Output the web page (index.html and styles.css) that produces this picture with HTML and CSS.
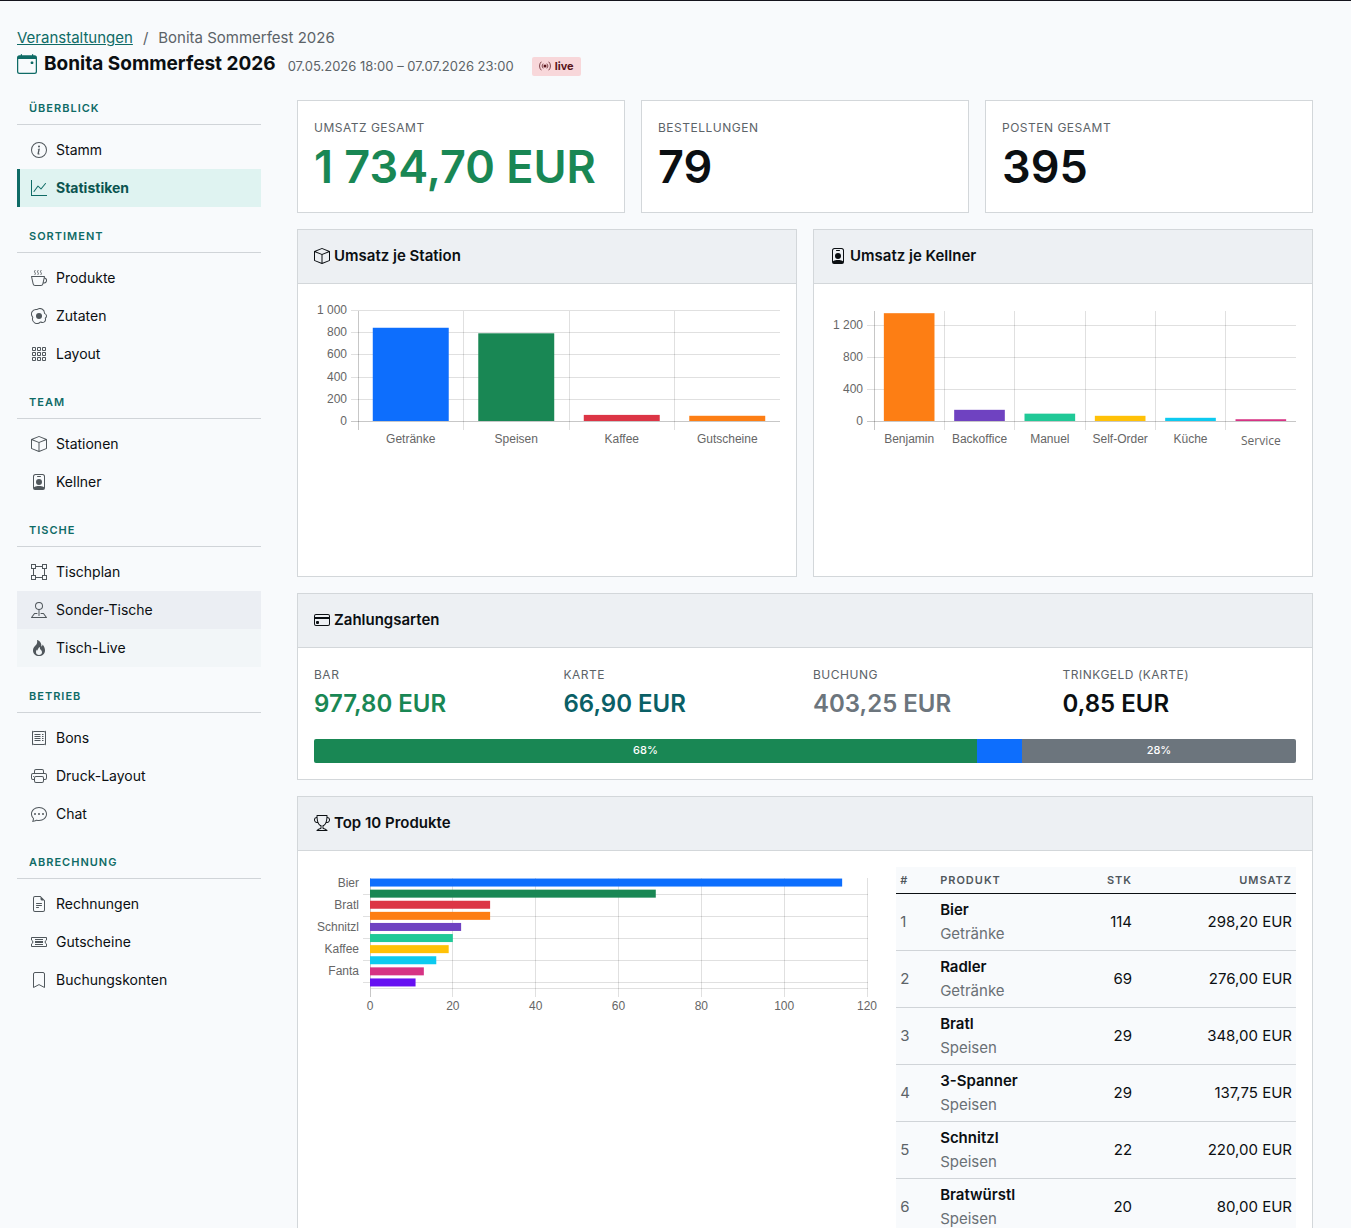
FILE: index.html
```html
<!DOCTYPE html>
<html lang="de">
<head>
    <meta charset="UTF-8">
    <meta name="viewport" content="width=device-width, initial-scale=1.0">
    <title>Bonita Sommerfest 2026</title>
    <link rel="stylesheet" href="styles.css">
</head>
<body>
    <!-- Icons -->
    <svg class="sprite" aria-hidden="true">
        <symbol id="i-calendar" viewBox="0 0 16 16"><path d="M11 6.5a.5.5 0 0 1 .5-.5h1a.5.5 0 0 1 .5.5v1a.5.5 0 0 1-.5.5h-1a.5.5 0 0 1-.5-.5z"/><path d="M3.500 0a.5.5 0 0 1 .5.5V1h8V.5a.5.5 0 0 1 1 0V1h1a2 2 0 0 1 2 2v11a2 2 0 0 1-2 2H2a2 2 0 0 1-2-2V3a2 2 0 0 1 2-2h1V.5a.5.5 0 0 1 .5-.5M1 4v10a1 1 0 0 0 1 1h12a1 1 0 0 0 1-1V4z"/></symbol>
        <symbol id="i-broadcast" viewBox="0 0 16 16"><circle cx="8" cy="8" r="2"/><path fill="none" stroke="currentColor" stroke-linecap="round" d="M2.700 2.700a7.500 7.500 0 0 0 0 10.600M5.200 5.200a4 4 0 0 0 0 5.600M10.800 5.200a4 4 0 0 1 0 5.600M13.300 2.700a7.500 7.500 0 0 1 0 10.600"/></symbol>
        <symbol id="i-info" viewBox="0 0 16 16"><path d="M8 15A7 7 0 1 1 8 1a7 7 0 0 1 0 14m0 1A8 8 0 1 0 8 0a8 8 0 0 0 0 16"/><path d="m8.930 6.588-2.290.287-.082.380.450.083c.294.070.352.176.288.469l-.738 3.468c-.194.897.105 1.319.808 1.319.545 0 1.178-.252 1.465-.598l.088-.416c-.200.176-.492.246-.686.246-.275 0-.375-.193-.304-.533zM9 4.500a1 1 0 1 1-2 0 1 1 0 0 1 2 0"/></symbol>
        <symbol id="i-graph" viewBox="0 0 16 16"><path d="M0 0h1v15h15v1H0zm14.817 3.113a.5.5 0 0 1 .07.704l-4.500 5.500a.5.5 0 0 1-.74.037L7.060 6.767l-3.656 5.027a.5.5 0 0 1-.808-.588l4-5.500a.5.5 0 0 1 .758-.060l2.609 2.610 4.150-5.073a.5.5 0 0 1 .704-.070"/></symbol>
        <symbol id="i-cup" viewBox="0 0 16 16"><path d="M.5 6a.5.5 0 0 0-.488.608l1.652 7.434A2.500 2.500 0 0 0 4.104 16h5.792a2.500 2.500 0 0 0 2.440-1.958l.131-.590a3 3 0 0 0 1.300-5.854l.221-.990A.5.5 0 0 0 13.500 6zM13 12.500a2 2 0 0 1-.316-.025l.867-3.898A2.001 2.001 0 0 1 13 12.500M2.640 13.825 1.123 7h11.754l-1.517 6.825A1.500 1.500 0 0 1 9.896 15H4.104a1.500 1.500 0 0 1-1.464-1.175"/><path fill="none" stroke="currentColor" stroke-linecap="round" d="M4 .5c-.900 1.300-.500 1.500 0 2.200s.500 1 0 1.800M7 .5c-.900 1.300-.500 1.500 0 2.200s.500 1 0 1.800M10 .5c-.900 1.300-.500 1.500 0 2.200s.500 1 0 1.800"/></symbol>
        <symbol id="i-egg" viewBox="0 0 16 16"><path d="M8 11a3 3 0 1 0 0-6 3 3 0 0 0 0 6"/><path d="M13.997 5.170a5 5 0 0 0-8.101-4.090A5 5 0 0 0 1.280 9.342a5 5 0 0 0 8.336 5.109 3.500 3.500 0 0 0 5.201-4.065 3.001 3.001 0 0 0-.822-5.216zm-1-.034a1 1 0 0 0 .668.977 2.001 2.001 0 0 1 .547 3.478 1 1 0 0 0-.341 1.113 2.500 2.500 0 0 1-3.715 2.905 1 1 0 0 0-1.262.152 4 4 0 0 1-6.670-4.087 1 1 0 0 0-.200-1 4 4 0 0 1 3.693-6.610 1 1 0 0 0 .8-.2 4 4 0 0 1 6.480 3.273z"/></symbol>
        <symbol id="i-grid" viewBox="0 0 16 16"><path fill="none" stroke="currentColor" d="M1.500 1.500h3v3h-3zM6.500 1.500h3v3h-3zM11.500 1.500h3v3h-3zM1.500 6.500h3v3h-3zM6.500 6.500h3v3h-3zM11.500 6.500h3v3h-3zM1.500 11.500h3v3h-3zM6.500 11.500h3v3h-3zM11.500 11.500h3v3h-3z"/></symbol>
        <symbol id="i-box" viewBox="0 0 16 16"><path d="M8.186 1.113a.5.5 0 0 0-.372 0L1.846 3.500 8 5.961 14.154 3.500zM15 4.239l-6.500 2.600v7.922l6.500-2.600V4.240zM7.500 14.762V6.838L1 4.239v7.923zM7.443.184a1.500 1.500 0 0 1 1.114 0l7.129 2.852A.5.5 0 0 1 16 3.500v8.662a1 1 0 0 1-.629.928l-7.185 2.874a.5.5 0 0 1-.372 0L.63 13.090a1 1 0 0 1-.63-.928V3.500a.5.5 0 0 1 .314-.464z"/></symbol>
        <symbol id="i-badge" viewBox="0 0 16 16"><path d="M6.500 2a.5.5 0 0 0 0 1h3a.5.5 0 0 0 0-1zM11 8a3 3 0 1 1-6 0 3 3 0 0 1 6 0"/><path d="M4.500 0A2.500 2.500 0 0 0 2 2.500V14a2 2 0 0 0 2 2h8a2 2 0 0 0 2-2V2.500A2.500 2.500 0 0 0 11.500 0zM3 2.500A1.500 1.500 0 0 1 4.500 1h7A1.500 1.500 0 0 1 13 2.500v10.795a4.200 4.200 0 0 0-.776-.492C11.392 12.387 10.063 12 8 12s-3.392.387-4.224.803a4.200 4.200 0 0 0-.776.492z"/></symbol>
        <symbol id="i-plan" viewBox="0 0 16 16"><path d="M5 2V0H0v5h2v6H0v5h5v-2h6v2h5v-5h-2V5h2V0h-5v2zm6 1v2h2v6h-2v2H5v-2H3V5h2V3zm1-2h3v3h-3zm3 11v3h-3v-3zM4 15H1v-3h3zM1 4V1h3v3z"/></symbol>
        <symbol id="i-pin" viewBox="0 0 16 16"><path d="M3.100 11.200a.5.5 0 0 1 .4-.2H6a.5.5 0 0 1 0 1H3.750L1.500 15h13l-2.250-3H10a.5.5 0 0 1 0-1h2.500a.5.5 0 0 1 .4.2l3 4a.5.5 0 0 1-.4.8H.5a.5.5 0 0 1-.4-.8z"/><path d="M8 1a3 3 0 1 0 0 6 3 3 0 0 0 0-6M4 4a4 4 0 1 1 4.500 3.969V13.500a.5.5 0 0 1-1 0V7.970A4 4 0 0 1 4 3.999z"/></symbol>
        <symbol id="i-fire" viewBox="0 0 16 16"><path d="M8 16c3.314 0 6-2 6-5.500 0-1.500-.5-4-2.500-6 .25 1.500-1.250 2-1.250 2C11 4 9 .5 6 0c.357 2 .5 4-2 6-1.250 1-2 2.729-2 4.500C2 14 4.686 16 8 16m0-1c-1.657 0-3-1-3-2.750 0-.750.250-2 1.250-3C6.125 10 7 10.500 7 10.500c-.375-1.250.500-3.250 2-3.500-.179 1-.250 2 1 3 .625.500 1 1.364 1 2.250C11 14 9.657 15 8 15"/></symbol>
        <symbol id="i-receipt" viewBox="0 0 16 16"><path fill="none" stroke="currentColor" stroke-linejoin="round" d="M1.500 1.200l1.500.8 1-1 1 1 1-1 1 1 1-1 1 1 1-1 1 1 1-1 1 1 1.500-.8v13.600l-1.500-.8-1 1-1-1-1 1-1-1-1 1-1-1-1 1-1-1-1 1-1-1-1.500.8zM3.500 4.500h6M3.500 6.500h6M3.500 8.500h6M3.500 10.500h6M11 4.500h1.500M11 6.500h1.500M11 8.500h1.500M11 10.500h1.500"/></symbol>
        <symbol id="i-printer" viewBox="0 0 16 16"><path d="M2.500 8a.5.5 0 1 0 0 1 .5.5 0 0 0 0-1"/><path d="M5 1a2 2 0 0 0-2 2v2H2a2 2 0 0 0-2 2v3a2 2 0 0 0 2 2h1v1a2 2 0 0 0 2 2h6a2 2 0 0 0 2-2v-1h1a2 2 0 0 0 2-2V7a2 2 0 0 0-2-2h-1V3a2 2 0 0 0-2-2zM4 3a1 1 0 0 1 1-1h6a1 1 0 0 1 1 1v2H4zm1 5a2 2 0 0 0-2 2v1H2a1 1 0 0 1-1-1V7a1 1 0 0 1 1-1h12a1 1 0 0 1 1 1v3a1 1 0 0 1-1 1h-1v-1a2 2 0 0 0-2-2zm7 2v3a1 1 0 0 1-1 1H5a1 1 0 0 1-1-1v-3a1 1 0 0 1 1-1h6a1 1 0 0 1 1 1"/></symbol>
        <symbol id="i-chat" viewBox="0 0 16 16"><path d="M5 8a1 1 0 1 1-2 0 1 1 0 0 1 2 0m4 0a1 1 0 1 1-2 0 1 1 0 0 1 2 0m3 1a1 1 0 1 0 0-2 1 1 0 0 0 0 2"/><path d="m2.165 15.803.02-.004c1.830-.363 2.948-.842 3.468-1.105A9 9 0 0 0 8 15c4.418 0 8-3.134 8-7s-3.582-7-8-7-8 3.134-8 7c0 1.760.743 3.370 1.970 4.600a10.400 10.400 0 0 1-.524 2.318l-.003.011a11 11 0 0 1-.244.637c-.079.186.074.394.273.362a22 22 0 0 0 .693-.125m.8-3.108a1 1 0 0 0-.287-.801C1.618 10.830 1 9.468 1 8c0-3.192 3.004-6 7-6s7 2.808 7 6-3.004 6-7 6a8 8 0 0 1-2.088-.272 1 1 0 0 0-.711.074c-.387.196-1.240.570-2.634.893a11 11 0 0 0 .398-2"/></symbol>
        <symbol id="i-file" viewBox="0 0 16 16"><path d="M5.500 7a.5.5 0 0 0 0 1h5a.5.5 0 0 0 0-1zM5 9.500a.5.5 0 0 1 .5-.5h5a.5.5 0 0 1 0 1h-5a.5.5 0 0 1-.5-.5m0 2a.5.5 0 0 1 .5-.5h2a.5.5 0 0 1 0 1h-2a.5.5 0 0 1-.5-.5"/><path d="M9.500 0H4a2 2 0 0 0-2 2v12a2 2 0 0 0 2 2h8a2 2 0 0 0 2-2V4.500zm0 1v2A1.500 1.500 0 0 0 11 4.500h2V14a1 1 0 0 1-1 1H4a1 1 0 0 1-1-1V2a1 1 0 0 1 1-1z"/></symbol>
        <symbol id="i-ticket" viewBox="0 0 16 16"><path fill="none" stroke="currentColor" stroke-linejoin="round" d="M.5 3.500h15v2.600a2 2 0 0 0 0 3.800v2.600H.5V9.900a2 2 0 0 0 0-3.800zM4 5.500h8M4 7.500h8M4 8.500h8M4 10.500h8"/></symbol>
        <symbol id="i-bookmark" viewBox="0 0 16 16"><path fill="none" stroke="currentColor" stroke-linejoin="round" d="M2.500 15.500V2A1.500 1.500 0 0 1 4 .5h8A1.500 1.500 0 0 1 13.500 2v13.500L8 12.600z"/></symbol>
        <symbol id="i-card" viewBox="0 0 16 16"><path d="M0 4a2 2 0 0 1 2-2h12a2 2 0 0 1 2 2v8a2 2 0 0 1-2 2H2a2 2 0 0 1-2-2zm2-1a1 1 0 0 0-1 1v1h14V4a1 1 0 0 0-1-1zm13 4H1v5a1 1 0 0 0 1 1h12a1 1 0 0 0 1-1z"/><path d="M2 10a1 1 0 0 1 1-1h1a1 1 0 0 1 1 1v1a1 1 0 0 1-1 1H3a1 1 0 0 1-1-1z"/></symbol>
        <symbol id="i-trophy" viewBox="0 0 16 16"><path d="M2.500.5A.5.5 0 0 1 3 0h10a.5.5 0 0 1 .5.5q0 .807-.034 1.536a3 3 0 1 1-1.133 5.890c-.790 1.865-1.878 2.777-2.833 3.011v2.173l1.425.356c.194.048.377.135.537.255L13.300 15.100a.5.5 0 0 1-.3.9H3a.5.5 0 0 1-.3-.9l1.838-1.379c.160-.120.343-.207.537-.255L6.500 13.110v-2.173c-.955-.234-2.043-1.146-2.833-3.012a3 3 0 1 1-1.132-5.890A33 33 0 0 1 2.500.5m.099 2.540a2 2 0 0 0 .720 3.935c-.333-1.050-.588-2.346-.720-3.935m10.083 3.935a2 2 0 0 0 .720-3.935c-.133 1.590-.388 2.885-.720 3.935M3.504 1q.010.775.056 1.469c.130 2.028.457 3.546.870 4.667C5.294 9.480 6.484 10 7 10a.5.5 0 0 1 .5.5v2.610a1 1 0 0 1-.757.970l-1.426.356a.5.5 0 0 0-.179.085L4.500 15h7l-.638-.479a.5.5 0 0 0-.180-.085l-1.425-.356a1 1 0 0 1-.757-.970V10.500A.5.5 0 0 1 9 10c.516 0 1.706-.520 2.570-2.864.413-1.120.740-2.640.870-4.667q.045-.694.056-1.469z"/></symbol>
    </svg>

    <header class="page-header">
        <nav class="breadcrumb" aria-label="Breadcrumb">
            <a href="#">Veranstaltungen</a>
            <span>/</span>
            <span>Bonita Sommerfest 2026</span>
        </nav>
        <div class="title-row">
            <svg class="title-icon"><use href="#i-calendar"/></svg>
            <h1>Bonita Sommerfest 2026</h1>
            <span class="date">07.05.2026 18:00 – 07.07.2026 23:00</span>
            <span class="badge"><svg><use href="#i-broadcast"/></svg>live</span>
        </div>
    </header>

    <div class="layout">
        <nav class="sidebar">
            <h2>Überblick</h2>
            <a href="#"><svg><use href="#i-info"/></svg>Stamm</a>
            <a href="#" class="active"><svg><use href="#i-graph"/></svg>Statistiken</a>
            <h2>Sortiment</h2>
            <a href="#"><svg><use href="#i-cup"/></svg>Produkte</a>
            <a href="#"><svg><use href="#i-egg"/></svg>Zutaten</a>
            <a href="#"><svg><use href="#i-grid"/></svg>Layout</a>
            <h2>Team</h2>
            <a href="#"><svg><use href="#i-box"/></svg>Stationen</a>
            <a href="#"><svg><use href="#i-badge"/></svg>Kellner</a>
            <h2>Tische</h2>
            <a href="#"><svg><use href="#i-plan"/></svg>Tischplan</a>
            <a href="#" class="hovered"><svg><use href="#i-pin"/></svg>Sonder-Tische</a>
            <a href="#" class="fading"><svg><use href="#i-fire"/></svg>Tisch-Live</a>
            <h2>Betrieb</h2>
            <a href="#"><svg><use href="#i-receipt"/></svg>Bons</a>
            <a href="#"><svg><use href="#i-printer"/></svg>Druck-Layout</a>
            <a href="#"><svg><use href="#i-chat"/></svg>Chat</a>
            <h2>Abrechnung</h2>
            <a href="#"><svg><use href="#i-file"/></svg>Rechnungen</a>
            <a href="#"><svg><use href="#i-ticket"/></svg>Gutscheine</a>
            <a href="#"><svg><use href="#i-bookmark"/></svg>Buchungskonten</a>
        </nav>

        <main class="content">
            <div class="stats">
                <div class="card stat">
                    <div class="label">Umsatz gesamt</div>
                    <div class="stat-value green">1 734,70 EUR</div>
                </div>
                <div class="card stat">
                    <div class="label">Bestellungen</div>
                    <div class="stat-value">79</div>
                </div>
                <div class="card stat">
                    <div class="label">Posten gesamt</div>
                    <div class="stat-value">395</div>
                </div>
            </div>

            <div class="charts">
                <section class="card">
                    <h3 class="card-header"><svg><use href="#i-box"/></svg>Umsatz je Station</h3>
                    <div class="card-body chart-body">
                        <svg class="chart" id="chart-station"></svg>
                    </div>
                </section>
                <section class="card">
                    <h3 class="card-header"><svg><use href="#i-badge"/></svg>Umsatz je Kellner</h3>
                    <div class="card-body chart-body">
                        <svg class="chart" id="chart-kellner"></svg>
                    </div>
                </section>
            </div>

            <section class="card">
                <h3 class="card-header"><svg><use href="#i-card"/></svg>Zahlungsarten</h3>
                <div class="card-body">
                    <div class="payments">
                        <div>
                            <div class="label">Bar</div>
                            <div class="pay-value green">977,80 EUR</div>
                        </div>
                        <div>
                            <div class="label">Karte</div>
                            <div class="pay-value teal">66,90 EUR</div>
                        </div>
                        <div>
                            <div class="label">Buchung</div>
                            <div class="pay-value gray">403,25 EUR</div>
                        </div>
                        <div>
                            <div class="label">Trinkgeld (Karte)</div>
                            <div class="pay-value">0,85 EUR</div>
                        </div>
                    </div>
                    <div class="progress">
                        <div class="bar bar-green" style="width: 67.5%">68%</div>
                        <div class="bar bar-blue" style="width: 4.6%"></div>
                        <div class="bar bar-gray" style="width: 27.9%">28%</div>
                    </div>
                </div>
            </section>

            <section class="card">
                <h3 class="card-header"><svg><use href="#i-trophy"/></svg>Top 10 Produkte</h3>
                <div class="card-body top-products">
                    <div class="top-chart">
                        <svg class="chart" id="chart-top"></svg>
                    </div>
                    <div class="top-table">
                        <table>
                            <thead>
                                <tr><th class="col-nr">#</th><th>Produkt</th><th class="col-stk">Stk</th><th class="col-sum">Umsatz</th></tr>
                            </thead>
                            <tbody>
                                <tr><td>1</td><td><strong>Bier</strong><small>Getränke</small></td><td>114</td><td>298,20 EUR</td></tr>
                                <tr><td>2</td><td><strong>Radler</strong><small>Getränke</small></td><td>69</td><td>276,00 EUR</td></tr>
                                <tr><td>3</td><td><strong>Bratl</strong><small>Speisen</small></td><td>29</td><td>348,00 EUR</td></tr>
                                <tr><td>4</td><td><strong>3-Spanner</strong><small>Speisen</small></td><td>29</td><td>137,75 EUR</td></tr>
                                <tr><td>5</td><td><strong>Schnitzl</strong><small>Speisen</small></td><td>22</td><td>220,00 EUR</td></tr>
                                <tr><td>6</td><td><strong>Bratwürstl</strong><small>Speisen</small></td><td>20</td><td>80,00 EUR</td></tr>
                            </tbody>
                        </table>
                    </div>
                </div>
            </section>
        </main>
    </div>
    <script src="charts.js"></script>
</body>
</html>
```
FILE: styles.css
```css
* {
    box-sizing: border-box;
}

body {
    margin: 0;
    padding: 25px 38px 24px 17px;
    border-top: 1px solid #14141c;
    background-color: #f8fafc;
    color: #0b0f12;
    font-family: Inter, "Liberation Sans", sans-serif;
    font-size: 15px;
    line-height: 24px;
}

h1, h2, h3 {
    margin: 0;
}

svg {
    fill: currentColor;
    flex-shrink: 0;
}

.sprite {
    display: none;
}

/* Kopfbereich */
.breadcrumb {
    display: flex;
    gap: 10px;
    color: #5c6368;
}

.breadcrumb a {
    color: #0f6b66;
}

.title-row {
    display: flex;
    align-items: center;
    height: 28px;
}

.title-icon {
    width: 20px;
    height: 20px;
    margin-right: 7px;
    color: #0f6b66;
}

h1 {
    font-size: 19px;
    font-weight: 700;
}

.date {
    margin: 3px 18px 0 12px;
    font-size: 13px;
    line-height: 20px;
    color: #5c6368;
}

.badge {
    display: flex;
    align-items: center;
    gap: 4px;
    height: 19px;
    margin-top: 4px;
    padding: 0 7px;
    border-radius: 2px;
    background-color: #f8d7da;
    color: #58151c;
    font-size: 11px;
    font-weight: 700;
}

.badge svg {
    width: 12px;
    height: 12px;
}

.layout {
    display: flex;
    gap: 36px;
    margin-top: 22px;
}

/* Navigation */
.sidebar {
    width: 244px;
    flex-shrink: 0;
}

.sidebar h2 {
    margin: 21px 0 6px;
    padding: 0 12px 8px;
    border-bottom: 1px solid #d0d4d8;
    color: #0f6b66;
    font-size: 11px;
    line-height: 16px;
    font-weight: 600;
    letter-spacing: 1px;
    text-transform: uppercase;
}

.sidebar h2:first-child {
    margin-top: 0;
}

.sidebar a {
    display: flex;
    align-items: center;
    gap: 9px;
    height: 38px;
    padding-left: 11px;
    border-left: 3px solid transparent;
    color: #0b0f12;
    font-size: 14px;
    text-decoration: none;
}

.sidebar a svg {
    width: 16px;
    height: 16px;
    color: #50575c;
}

.sidebar a.active {
    border-left-color: #0f6b66;
    background-color: #dff3f1;
    color: #0b5450;
    font-weight: 700;
}

.sidebar a.active svg {
    color: #0f6b66;
}

.sidebar a.hovered {
    border-left-color: #ebeef3;
    background-color: #ebeef3;
}

.sidebar a.fading {
    border-left-color: #f2f6f8;
    background-color: #f2f6f8;
}

/* Karten */
.content {
    flex: 1;
    min-width: 0;
    display: flex;
    flex-direction: column;
    gap: 16px;
}

.card {
    border: 1px solid #d3d7da;
    background-color: #fff;
}

.card-header {
    display: flex;
    align-items: center;
    gap: 4px;
    height: 54px;
    padding: 0 16px 2px;
    border-bottom: 1px solid #d3d7da;
    background-color: #edf0f3;
    font-size: 15px;
    font-weight: 600;
}

.card-header svg {
    width: 16px;
    height: 16px;
}

.card-body {
    padding: 16px;
}

.stats {
    display: grid;
    grid-template-columns: repeat(3, 1fr);
    gap: 16px;
}

.stat {
    height: 113px;
    padding: 16px;
}

.label {
    color: #5c6368;
    font-size: 12px;
    line-height: 22px;
    letter-spacing: 0.5px;
    text-transform: uppercase;
}

.stat-value {
    font-size: 45px;
    line-height: 56px;
    font-weight: 600;
    white-space: nowrap;
}

.green {
    color: #198754;
}

.teal {
    color: #0a5f66;
}

.gray {
    color: #6c757d;
}

.charts {
    display: grid;
    grid-template-columns: repeat(2, 1fr);
    gap: 16px;
}

.chart-body {
    height: 292px;
}

.chart {
    display: block;
    width: 100%;
    height: 150px;
    overflow: visible;
    font-family: "Liberation Sans", Arial, sans-serif;
    font-size: 12px;
}

.chart text {
    fill: #666;
}

.chart .alt-font {
    font-family: "Open Sans", sans-serif;
}

.chart line {
    stroke: rgba(0, 0, 0, 0.12);
    shape-rendering: crispEdges;
}

.chart line.axis {
    stroke: rgba(0, 0, 0, 0.22);
}

/* Zahlungsarten */
.payments {
    display: grid;
    grid-template-columns: repeat(4, 1fr);
    gap: 16px;
}

.pay-value {
    font-size: 24px;
    line-height: 36px;
    font-weight: 600;
}

.progress {
    display: flex;
    height: 24px;
    margin-top: 17px;
    border-radius: 2px;
    overflow: hidden;
}

.bar {
    color: #fff;
    font-size: 11px;
    line-height: 22px;
    font-weight: 500;
    text-align: center;
}

.bar-green {
    background-color: #198754;
}

.bar-blue {
    background-color: #0d6efd;
}

.bar-gray {
    background-color: #6c757d;
}

/* Top 10 */
.top-products {
    display: grid;
    grid-template-columns: repeat(12, 1fr);
    column-gap: 16px;
}

.top-chart {
    grid-column: span 7;
}

.top-table {
    grid-column: span 5;
}

table {
    width: 100%;
    border-collapse: separate;
    border-spacing: 0;
    background-color: #f8fafc;
}

th {
    height: 27px;
    padding: 0 4px;
    border-bottom: 1px solid #0b0f12;
    color: #50575c;
    font-size: 11px;
    line-height: 16px;
    font-weight: 600;
    letter-spacing: 1px;
    text-align: left;
    text-transform: uppercase;
}

td {
    height: 57px;
    padding: 4px;
    border-bottom: 1px solid #d0d4d8;
}

td strong, td small {
    display: block;
    font-size: 15px;
    font-weight: 600;
}

td small {
    color: #6a7075;
    font-weight: 400;
}

td:first-child {
    color: #5c6368;
}

.col-nr {
    width: 10%;
}

.col-stk {
    width: 20%;
}

.col-sum {
    width: 40%;
}

th:nth-child(n+3), td:nth-child(n+3) {
    text-align: right;
}
```
FILE: charts.js
```js
const colors = {
    blue: '#0d6efd', green: '#198754', red: '#dc3545', orange: '#fd7e14', purple: '#6f42c1',
    teal: '#20c997', yellow: '#ffc107', cyan: '#0dcaf0', pink: '#d63384', indigo: '#6610f2'
};

const TOP = 10;
const PLOT_HEIGHT = 111;

const line = (x1, y1, x2, y2, cls = '') =>
    `<line class="${cls}" x1="${Math.floor(x1) + 0.5}" y1="${Math.round(y1) + 0.5}" x2="${Math.floor(x2) + 0.5}" y2="${Math.round(y2) + 0.5}"/>`;

const text = (x, y, anchor, value, cls = '') =>
    `<text class="${cls}" x="${x}" y="${y}" text-anchor="${anchor}">${value}</text>`;

// Senkrechte Balken
function columnChart(id, max, step, items) {
    const svg = document.getElementById(id);
    const width = svg.clientWidth;
    const left = 44;
    const slot = (width - left) / items.length;
    const base = TOP + PLOT_HEIGHT;
    let out = '';

    for (let v = 0; v <= max; v += step) {
        const y = base - v / max * PLOT_HEIGHT;
        const label = v >= 1000 ? `${Math.floor(v / 1000)} ${String(v % 1000).padStart(3, '0')}` : v;
        out += line(left - 8, y, width - 1, y, v === 0 ? 'axis' : '');
        out += text(left - 11, y + 4, 'end', label);
    }

    items.forEach(([name, value, color, cls], i) => {
        const x = left + i * slot;
        const height = value / max * PLOT_HEIGHT;
        out += line(x, TOP, x, base + 8, i === 0 ? 'axis' : '');
        out += `<rect x="${x + slot * 0.14}" y="${base - height}" width="${slot * 0.72}" height="${height}" fill="${colors[color]}"/>`;
        out += text(x + slot / 2, cls ? base + 24 : base + 22, 'middle', name, cls);
    });

    svg.innerHTML = out;
}

// Waagrechte Balken, nur jede zweite Zeile ist beschriftet
function rowChart(id, max, step, items) {
    const svg = document.getElementById(id);
    const left = 56;
    const right = svg.clientWidth - 13;
    const slot = PLOT_HEIGHT / items.length;
    const base = TOP + PLOT_HEIGHT;
    let out = '';

    for (let v = 0; v <= max; v += step) {
        const x = left + v / max * (right - left);
        out += line(x, TOP, x, base + 8, v === 0 ? 'axis' : '');
        out += text(x, base + 22, 'middle', v);
    }
    out += line(left, base, right, base);

    items.forEach(([name, value, color], i) => {
        const y = TOP + (i + 0.5) * slot;
        if (name) {
            out += text(left - 11, y + 4, 'end', name);
        } else {
            out += line(left - 8, y, right, y);
        }
    });
    items.forEach(([name, value, color], i) => {
        const y = TOP + (i + 0.5) * slot;
        out += `<rect x="${left}" y="${y - 4}" width="${value / max * (right - left)}" height="8" fill="${colors[color]}"/>`;
    });

    svg.innerHTML = out;
}

function drawCharts() {
    columnChart('chart-station', 1000, 200, [
        ['Getränke', 840, 'blue'],
        ['Speisen', 790, 'green'],
        ['Kaffee', 55, 'red'],
        ['Gutscheine', 47, 'orange']
    ]);
    columnChart('chart-kellner', 1390, 400, [
        ['Benjamin', 1350, 'orange'],
        ['Backoffice', 140, 'purple'],
        ['Manuel', 92, 'teal'],
        ['Self-Order', 65, 'yellow'],
        ['Küche', 40, 'cyan'],
        ['Service', 22, 'pink', 'alt-font']
    ]);
    rowChart('chart-top', 120, 20, [
        ['Bier', 114, 'blue'],
        ['', 69, 'green'],
        ['Bratl', 29, 'red'],
        ['', 29, 'orange'],
        ['Schnitzl', 22, 'purple'],
        ['', 20, 'teal'],
        ['Kaffee', 19, 'yellow'],
        ['', 16, 'cyan'],
        ['Fanta', 13, 'pink'],
        ['', 11, 'indigo']
    ]);
}

drawCharts();
window.addEventListener('resize', drawCharts);
```
